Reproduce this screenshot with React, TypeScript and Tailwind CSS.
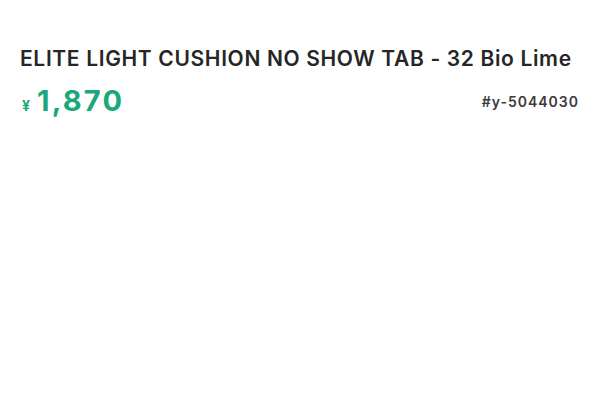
const App = () => {
  return (
    <div
      className="w-[600px] h-[400px] bg-white px-5 pt-[45px]"
      style={{ fontFamily: 'Inter, "Liberation Sans", sans-serif' }}
    >
      <h1 className="text-[21px] leading-[28px] font-semibold text-[#262626] tracking-[0.65px] whitespace-nowrap">
        ELITE LIGHT CUSHION NO SHOW TAB - 32 Bio Lime
      </h1>
      <div className="flex items-end justify-between mt-[12px]">
        <div className="flex items-baseline text-[#1ba77c] font-bold">
          <span className="text-[14px] ml-[2px] mr-[7px]">¥</span>
          <span className="text-[29px] leading-[32px] tracking-[2.2px]">1,870</span>
        </div>
        <span className="text-[14px] font-semibold text-[#3a3a3a] tracking-[1px] mb-[5px] mr-[1px]">
          #y-5044030
        </span>
      </div>
    </div>
  );
};

export default App;
